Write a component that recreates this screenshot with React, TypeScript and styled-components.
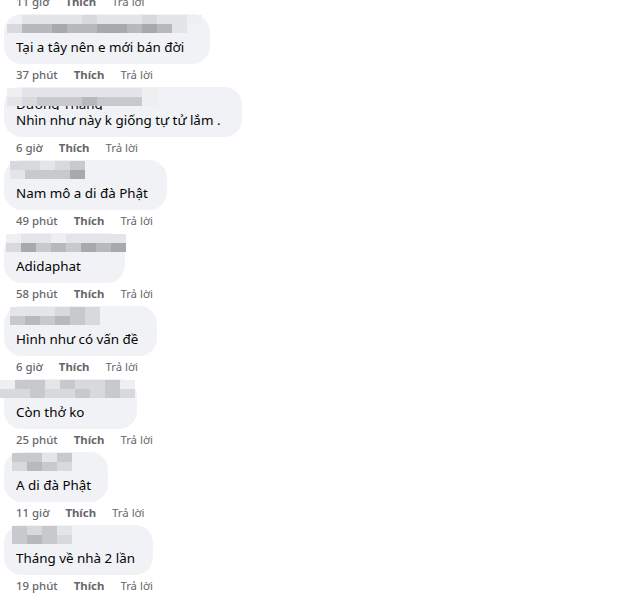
import React from "react";
import styled, { createGlobalStyle } from "styled-components";

const GlobalStyle = createGlobalStyle`
  body {
    margin: 0;
    background: #ffffff;
    font-family: "Noto Sans", "Liberation Sans", sans-serif;
    color: #050505;
    overflow: hidden;
  }
`;

const List = styled.div`
  display: flex;
  flex-direction: column;
  align-items: flex-start;
  margin-top: -9px;
  padding-left: 4px;
`;

const Comment = styled.div`
  display: flex;
  flex-direction: column;
  align-items: flex-start;
`;

const Bubble = styled.div<{ $minWidth: number }>`
  position: relative;
  background: #f0f2f5;
  border-radius: 18px;
  padding: 7px 12px 7px 12px;
  min-width: ${(p) => p.$minWidth}px;
  box-sizing: border-box;
`;

const Name = styled.div`
  height: 16px;
  font-size: 13.4px;
  line-height: 20px;
  white-space: nowrap;
  overflow: hidden;
`;

const Text = styled.div`
  font-size: 13.4px;
  line-height: 20px;
  white-space: nowrap;
`;

// pixelated cover over the commenter's name
const Mosaic = styled.div<{ $left: number }>`
  position: absolute;
  left: ${(p) => p.$left}px;
  top: 1px;
  display: flex;
  flex-direction: column;
`;

const MosaicRow = styled.div<{ $offset: number }>`
  display: flex;
  margin-left: ${(p) => p.$offset}px;
`;

const Cell = styled.span<{ $shade: string }>`
  width: 15px;
  height: 9px;
  background: ${(p) => p.$shade};
`;

const Meta = styled.div`
  display: flex;
  gap: 16px;
  padding: 3px 0 4px 12px;
  font-size: 11.4px;
  line-height: 16px;
  color: #65676b;
`;

const Time = styled.span`
  font-weight: 500;
`;

const Like = styled.span`
  font-weight: 700;
`;

const Reply = styled.span`
  font-weight: 400;
`;

const shades: Record<string, string> = {
  a: "#eeeff1",
  b: "#e4e5e8",
  c: "#d8d9dd",
  d: "#c8c9cd",
  e: "#b8b9bd",
  f: "#a8a9ad",
};

type Item = {
  text: string;
  time: string;
  name?: string;
  minWidth: number;
  mosaicLeft: number;
  rows: [number, string][];
};

const items: Item[] = [
  {
    text: "Tại a tây nên e mới bán đời",
    time: "37 phút",
    minWidth: 206,
    mosaicLeft: 3,
    rows: [
      [15, "bbbbcbbbcbba"],
      [0, "ceefeeffefeb"],
    ],
  },
  {
    text: "Nhìn như này k giống tự tử lắm .",
    time: "6 giờ",
    name: "Dương Thắng",
    minWidth: 238,
    mosaicLeft: 3,
    rows: [
      [0, "abbbbbbbba"],
      [0, "bcdddeddda"],
    ],
  },
  {
    text: "Nam mô a di đà Phật",
    time: "49 phút",
    minWidth: 163,
    mosaicLeft: 6,
    rows: [
      [0, "ccbcd"],
      [0, "bdddf"],
    ],
  },
  {
    text: "Adidaphat",
    time: "58 phút",
    minWidth: 121,
    mosaicLeft: 2,
    rows: [
      [0, "abbabbbb"],
      [0, "cfdedfef"],
    ],
  },
  {
    text: "Hình như có vấn đề",
    time: "6 giờ",
    minWidth: 153,
    mosaicLeft: 6,
    rows: [
      [0, "bbbcdc"],
      [0, "dededc"],
    ],
  },
  {
    text: "Còn thở ko",
    time: "25 phút",
    minWidth: 133,
    mosaicLeft: -4,
    rows: [
      [0, "addbdccda"],
      [0, "ccdccdcdc"],
    ],
  },
  {
    text: "A di đà Phật",
    time: "11 giờ",
    minWidth: 104,
    mosaicLeft: 8,
    rows: [
      [0, "ddbd"],
      [0, "cedc"],
    ],
  },
  {
    text: "Tháng về nhà 2 lần",
    time: "19 phút",
    minWidth: 149,
    mosaicLeft: 8,
    rows: [
      [0, "dcdb"],
      [0, "dedc"],
    ],
  },
];

function CommentItem({ item }: { item: Item }) {
  return (
    <Comment>
      <Bubble $minWidth={item.minWidth}>
        <Name>{item.name ?? ""}</Name>
        <Text>{item.text}</Text>
        <Mosaic $left={item.mosaicLeft}>
          {item.rows.map(([offset, row], i) => (
            <MosaicRow key={i} $offset={offset}>
              {row.split("").map((s, j) => (
                <Cell key={j} $shade={shades[s]} />
              ))}
            </MosaicRow>
          ))}
        </Mosaic>
      </Bubble>
      <Meta>
        <Time>{item.time}</Time>
        <Like>Thích</Like>
        <Reply>Trả lời</Reply>
      </Meta>
    </Comment>
  );
}

export default function App() {
  return (
    <>
      <GlobalStyle />
      <List>
        <Meta>
          <Time>11 giờ</Time>
          <Like>Thích</Like>
          <Reply>Trả lời</Reply>
        </Meta>
        {items.map((item, i) => (
          <CommentItem key={i} item={item} />
        ))}
        <Bubble $minWidth={190}>
          <Name />
          <Text>&nbsp;</Text>
        </Bubble>
      </List>
    </>
  );
}
